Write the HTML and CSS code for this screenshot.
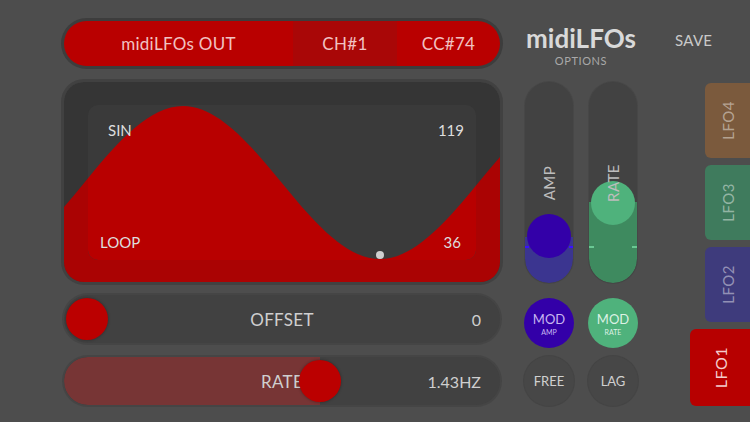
FILE: index.html
```html
<!DOCTYPE html>
<html lang="en">
<head>
    <meta charset="UTF-8">
    <meta name="viewport" content="width=device-width, initial-scale=1.0">
    <title>midiLFOs</title>
    <link rel="stylesheet" href="styles.css">
</head>
<body>
    <div class="app">
        <div class="main">
            <div class="outbar">
                <div class="out-name">midiLFOs OUT</div>
                <div class="out-ch">CH#1</div>
                <div class="out-cc">CC#74</div>
            </div>

            <div class="wave">
                <svg width="436" height="200" viewBox="0 0 436 200">
                    <defs>
                        <clipPath id="inner">
                            <rect x="24" y="23" width="388" height="155" rx="10"/>
                        </clipPath>
                    </defs>
                    <rect x="0" y="0" width="436" height="200" fill="#353535"/>
                    <path fill="#aa0303" d="M -77.5 177 C -43.1 177, -11.6 139.7, 20.5 100.5 C 52.6 61.3, 84.6 24, 119 24 C 153.4 24, 185.4 61.3, 217.5 100.5 C 249.6 139.7, 281.6 177, 316 177 C 350.4 177, 382.4 139.7, 414.5 100.5 C 446.6 61.3, 478.6 24, 513 24 L 513 210 L -77.5 210 Z"/>
                    <rect x="24" y="23" width="388" height="155" rx="10" fill="#3a3a3a"/>
                    <path clip-path="url(#inner)" fill="#b80000" d="M -77.5 177 C -43.1 177, -11.6 139.7, 20.5 100.5 C 52.6 61.3, 84.6 24, 119 24 C 153.4 24, 185.4 61.3, 217.5 100.5 C 249.6 139.7, 281.6 177, 316 177 C 350.4 177, 382.4 139.7, 414.5 100.5 C 446.6 61.3, 478.6 24, 513 24 L 513 210 L -77.5 210 Z"/>
                    <circle cx="316" cy="173" r="4" fill="#cfcfcf"/>
                    <text class="wave-label" x="44" y="54">SIN</text>
                    <text class="wave-label" x="400" y="54" text-anchor="end">119</text>
                    <text class="wave-label" x="36" y="166">LOOP</text>
                    <text class="wave-label" x="397" y="166" text-anchor="end">36</text>
                </svg>
            </div>

            <div class="hslider">
                <div class="knob" style="left: 2px;"></div>
                <span></span>
                <span class="hs-label">OFFSET</span>
                <span class="hs-value">0</span>
            </div>

            <div class="hslider">
                <div class="hs-fill" style="width: 256px;"></div>
                <div class="knob" style="left: 235px;"></div>
                <span></span>
                <span class="hs-label">RATE</span>
                <span class="hs-value">1.43HZ</span>
            </div>
        </div>

        <div class="side">
            <div class="side-head">
                <div class="brand">
                    <div class="brand-name">midiLFOs</div>
                    <div class="brand-sub">OPTIONS</div>
                </div>
                <div class="save">SAVE</div>
            </div>

            <div class="side-body">
                <div class="controls">
                    <div class="vslider">
                        <div class="vs-fill amp-fill" style="height: 46px;"></div>
                        <div class="vs-tick amp-tick" style="bottom: 35px;"></div>
                        <div class="vs-knob amp-knob" style="top: 132px;"></div>
                        <div class="vs-label">AMP</div>
                    </div>
                    <div class="vslider">
                        <div class="vs-fill rate-fill" style="height: 81px;"></div>
                        <div class="vs-tick rate-tick" style="bottom: 35px;"></div>
                        <div class="vs-knob rate-knob" style="top: 99px;"></div>
                        <div class="vs-label">RATE</div>
                    </div>

                    <div class="round mod-amp">MOD<small>AMP</small></div>
                    <div class="round mod-rate">MOD<small>RATE</small></div>
                    <div class="round plain">FREE</div>
                    <div class="round plain">LAG</div>
                </div>

                <div class="tabs">
                    <div class="tab lfo4"><span>LFO4</span></div>
                    <div class="tab lfo3"><span>LFO3</span></div>
                    <div class="tab lfo2"><span>LFO2</span></div>
                    <div class="tab lfo1"><span>LFO1</span></div>
                </div>
            </div>
        </div>
    </div>
</body>
</html>
```

FILE: styles.css
```css
body {
    margin: 0;
    background: #4d4d4d;
    font-family: 'Lato', 'Open Sans', sans-serif;
    color: #d8d8d8;
}

.app {
    display: flex;
    box-sizing: border-box;
    height: 422px;
    padding: 21px 0 0 64px;
    overflow: hidden;
}

/* left column */
.main {
    width: 436px;
    display: flex;
    flex-direction: column;
}

.outbar {
    display: flex;
    height: 45px;
    margin-bottom: 16px;
    border-radius: 23px;
    overflow: hidden;
    box-shadow: 0 0 0 3px #3d3d3d;
    background: #b90000;
    color: #f1c2c2;
    font-size: 17px;
    letter-spacing: 0.3px;
}

.outbar div {
    display: flex;
    align-items: center;
    justify-content: center;
}

.out-name {
    width: 229px;
}

.out-ch {
    width: 104px;
    background: #a90707;
}

.out-cc {
    width: 103px;
}

.wave {
    height: 200px;
    margin-bottom: 13px;
    border-radius: 20px;
    overflow: hidden;
    box-shadow: 0 0 0 3px #414141;
}

.wave svg {
    display: block;
}

.wave-label {
    font-family: 'Lato', sans-serif;
    font-size: 15px;
    fill: #dedede;
}

.hslider {
    position: relative;
    display: grid;
    grid-template-columns: 1fr auto 1fr;
    align-items: center;
    height: 48px;
    margin-bottom: 14px;
    padding: 0 19px;
    border-radius: 24px;
    background: #414141;
    box-shadow: 0 0 0 2px #454545;
    font-size: 17px;
    color: #cfcfcf;
    overflow: hidden;
}

.hs-label {
    position: relative;
    z-index: 1;
    letter-spacing: 0.3px;
}

.hs-value {
    justify-self: end;
    font-size: 16px;
}

.hs-fill {
    position: absolute;
    left: 0;
    top: 0;
    bottom: 0;
    background: #773535;
    border-radius: 24px 0 0 24px;
}

.knob {
    position: absolute;
    top: 3px;
    width: 42px;
    height: 42px;
    border-radius: 50%;
    background: #bb0000;
    box-shadow: 0 0 3px rgba(0, 0, 0, 0.35);
    z-index: 2;
}

/* right column */
.side {
    margin-left: 25px;
    width: 225px;
    display: flex;
    flex-direction: column;
}

.side-head {
    display: flex;
    height: 61px;
}

.brand {
    width: 112px;
    text-align: center;
}

.brand-name {
    font-size: 26px;
    font-weight: bold;
    line-height: 26px;
    margin-top: 4px;
    color: #d9d9d9;
}

.brand-sub {
    font-size: 11px;
    letter-spacing: 0.6px;
    color: #a9a9a9;
    margin-top: 3px;
}

.save {
    margin-left: 38px;
    margin-top: 10px;
    font-size: 15px;
    letter-spacing: 0.3px;
    color: #c9c9c9;
}

.side-body {
    display: flex;
}

.controls {
    width: 112px;
    display: grid;
    grid-template-columns: 48px 48px;
    grid-template-rows: 208px 50px 50px;
    column-gap: 16px;
    row-gap: 8px;
}

.vslider {
    position: relative;
    height: 201px;
    border-radius: 24px;
    background: #424242;
    box-shadow: 0 0 0 1px #474747;
    overflow: hidden;
}

.vs-fill {
    position: absolute;
    left: 0;
    right: 0;
    bottom: 0;
    border-radius: 0 0 24px 24px;
}

.amp-fill {
    background: #3b3590;
}

.rate-fill {
    background: #3e8a5f;
}

.vs-tick {
    position: absolute;
    left: 0;
    right: 0;
    height: 2px;
}

.amp-tick {
    background: linear-gradient(to right, #3a10ff 4px, transparent 4px, transparent 44px, #3a10ff 44px);
}

.rate-tick {
    background: linear-gradient(to right, #6ac894 5px, transparent 5px, transparent 43px, #6ac894 43px);
}

.vs-knob {
    position: absolute;
    left: 2px;
    width: 44px;
    height: 44px;
    border-radius: 50%;
}

.amp-knob {
    background: #3300a8;
}

.rate-knob {
    background: #4fb27c;
}

.vs-label {
    position: absolute;
    left: 50%;
    top: 101px;
    transform: translate(-50%, -50%) rotate(-90deg);
    font-size: 15px;
    letter-spacing: 0.5px;
    color: #bdbdbd;
    white-space: nowrap;
    z-index: 1;
}

.round {
    width: 50px;
    height: 50px;
    margin-left: -1px;
    border-radius: 50%;
    display: flex;
    flex-direction: column;
    align-items: center;
    justify-content: center;
    font-size: 13px;
    color: #d0d0d0;
}

.round small {
    font-size: 7px;
    margin-top: 1px;
}

.mod-amp {
    background: #3300a8;
    color: #c7b7f0;
}

.mod-rate {
    background: #4fb27c;
    color: #dcf1e4;
}

.plain {
    background: #474747;
    box-shadow: 0 0 0 1px #444;
}

.tabs {
    margin-left: auto;
    width: 60px;
    margin-top: 1px;
    display: flex;
    flex-direction: column;
    align-items: flex-end;
    gap: 7px;
}

.tab {
    width: 45px;
    height: 75px;
    border-radius: 6px 0 0 6px;
    display: flex;
    align-items: center;
    justify-content: center;
    font-size: 15px;
    color: rgba(255, 255, 255, 0.45);
}

.tab span {
    writing-mode: vertical-rl;
    transform: rotate(180deg);
    letter-spacing: 0.5px;
}

.lfo4 {
    background: #7b5a3d;
}

.lfo3 {
    background: #3f7b5d;
}

.lfo2 {
    background: #3e3b7c;
}

.lfo1 {
    width: 60px;
    height: 77px;
    background: #b70000;
    color: #f4cccc;
    font-size: 16px;
}
```
